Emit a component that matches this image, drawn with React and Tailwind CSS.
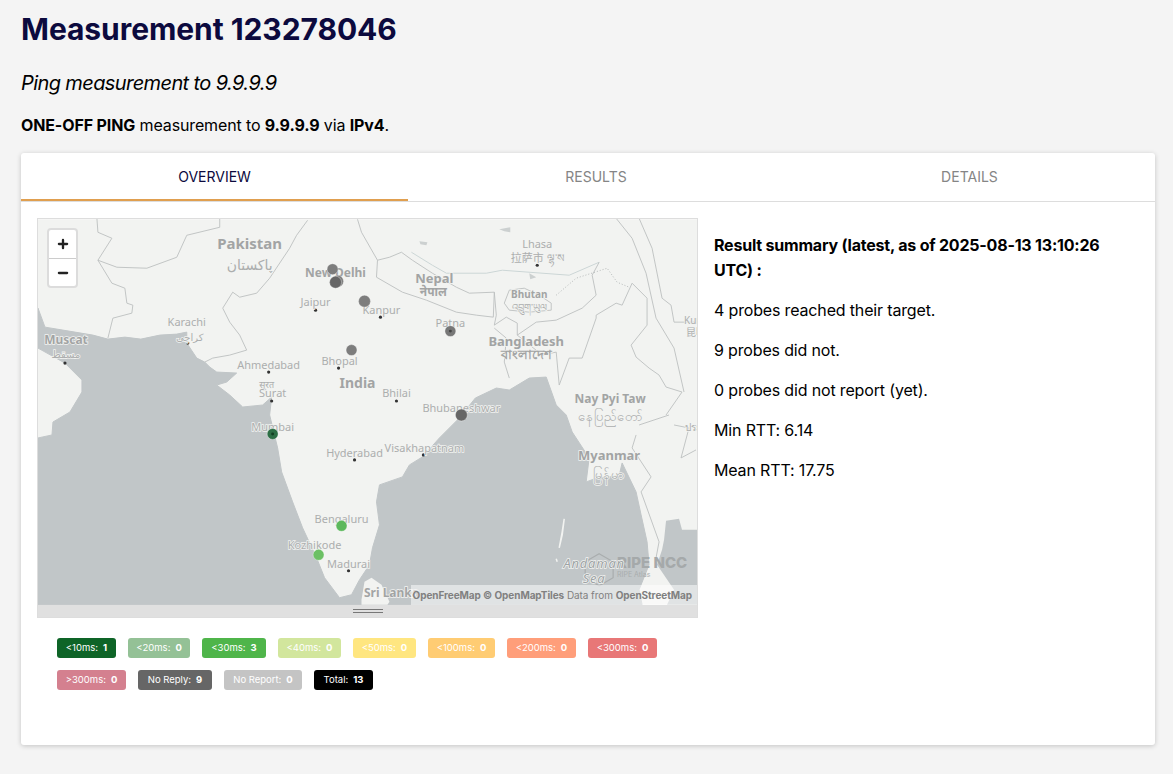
import React from "react";
import { Minus, Plus } from "lucide-react";

const badges = [
  [
    { label: "<10ms:", count: 1, color: "bg-[#0e6427] w-[59px]" },
    { label: "<20ms:", count: 0, color: "bg-[#94c196] w-[62px]" },
    { label: "<30ms:", count: 3, color: "bg-[#4fb54a] w-[64px]" },
    { label: "<40ms:", count: 0, color: "bg-[#d2e69d] w-[63px]" },
    { label: "<50ms:", count: 0, color: "bg-[#ffe680] w-[63px]" },
    { label: "<100ms:", count: 0, color: "bg-[#ffcc73] w-[67px]" },
    { label: "<200ms:", count: 0, color: "bg-[#ff9e7a] w-[69px]" },
    { label: "<300ms:", count: 0, color: "bg-[#e87777] w-[69px]" },
  ],
  [
    { label: ">300ms:", count: 0, color: "bg-[#d4808f] w-[69px]" },
    { label: "No Reply:", count: 9, color: "bg-[#666666] w-[74px]" },
    { label: "No Report:", count: 0, color: "bg-[#c4c4c4] w-[78px]" },
    { label: "Total:", count: 13, color: "bg-black w-[59px]" },
  ],
];

const sea =
  "M38 308 L45 327 L63 330 L93 335 L108 339 L125 337 L141 339 L160 335 L177 334 L187 332 L187 343 L197 358 L205 362 L210 367 L217 372 L237 373 L227 382 L217 385 L230 395 L243 407 L263 405 L272 397 L270 415 L278 448 L282 472 L293 502 L303 528 L317 558 L325 578 L340 598 L352 595 L360 580 L370 565 L373 548 L380 525 L377 502 L380 485 L403 477 L410 465 L423 457 L440 438 L460 418 L476 398 L497 388 L510 390 L530 378 L547 377 L557 405 L567 415 L573 432 L590 458 L587 482 L598 478 L620 476 L623 463 L637 492 L642 515 L648 542 L650 565 L640 590 L643 605 L38 605 L38 438 L52 435 L53 422 L70 412 L82 392 L82 380 L65 363 L38 348 Z";
const eastSea = "M698 530 L683 530 L680 519 L667 521 L665 540 L663 550 L658 565 L675 590 L668 605 L698 605 Z";
const sriLanka = "M362 600 L365 582 L372 578 L382 585 L390 602 L388 605 L362 605 Z";

const borders = [
  "M97 218 L98 232 L112 238 L98 260 L112 283 L125 288 L127 303 L133 305 L132 313 L113 318 L108 338",
  "M220 218 L220 227 L187 235 L177 257 L147 268 L117 267 L98 260",
  "M308 220 L297 235 L290 248 L270 278 L257 293 L240 297 L233 292 L223 308 L230 322 L240 335 L247 350 L230 355 L213 358 L205 362",
  "M358 219 L362 232 L378 260",
  "M378 260 L390 257 L402 252 L413 260 L433 273 L457 287 L470 293 L495 292 L494 317 L477 315 L457 312 L427 300 L403 292 L377 277 Z",
  "M505 303 L510 290 L525 288 L540 295 L552 303 L552 310 L530 312 L510 310 Z",
  "M495 292 L497 315 L495 325 L507 317 L518 323 L518 335 L537 322 L557 320 L583 308 L597 295 L593 275 L600 262",
  "M597 315 L617 303 L623 305 L633 283 L648 298 L648 325 L632 345 L637 357 L650 368 L660 375 L667 387 L683 392 L667 415",
  "M495 328 L507 338 L505 362 L510 378",
  "M518 335 L543 355 L557 352 L560 385 L570 358 L583 358 L597 318 L597 315",
  "M617 218 L633 238 L647 273 L657 318 L675 348 L685 392",
  "M640 218 L653 248 L663 298 L672 305 L675 322 L697 322",
  "M637 435 L633 448 L652 477 L642 492 L660 542 L657 558",
  "M640 425 L670 415",
  "M675 425 L690 428 L682 458 L697 450",
];

const cities = [
  [316, 310], [381, 317], [188, 343], [65, 363], [269, 372], [339, 368], [272, 401], [397, 401],
  [355, 460], [424, 455], [349, 571], [538, 265],
];

const labels = [
  { x: 250, y: 249, text: "Pakistan", size: 15, bold: true },
  { x: 250, y: 270, text: "پاکستان", size: 14 },
  { x: 336, y: 277, text: "New Delhi", size: 12, bold: true },
  { x: 316, y: 306, text: "Jaipur", size: 11 },
  { x: 382, y: 314, text: "Kanpur", size: 11 },
  { x: 451, y: 327, text: "Patna", size: 11 },
  { x: 187, y: 326, text: "Karachi", size: 11 },
  { x: 190, y: 341, text: "کراچی", size: 10 },
  { x: 66, y: 344, text: "Muscat", size: 12, bold: true },
  { x: 66, y: 358, text: "مسقط", size: 10 },
  { x: 269, y: 369, text: "Ahmedabad", size: 11 },
  { x: 340, y: 365, text: "Bhopal", size: 11 },
  { x: 358, y: 388, text: "India", size: 14, bold: true },
  { x: 267, y: 388, text: "सूरत", size: 9 },
  { x: 273, y: 397, text: "Surat", size: 11 },
  { x: 397, y: 397, text: "Bhilai", size: 11 },
  { x: 462, y: 412, text: "Bhubaneshwar", size: 11 },
  { x: 273, y: 431, text: "Mumbai", size: 11 },
  { x: 355, y: 457, text: "Hyderabad", size: 11 },
  { x: 425, y: 452, text: "Visakhapatnam", size: 11 },
  { x: 342, y: 523, text: "Bengaluru", size: 11 },
  { x: 315, y: 549, text: "Kozhikode", size: 11 },
  { x: 349, y: 568, text: "Madurai", size: 11 },
  { x: 392, y: 597, text: "Sri Lanka", size: 12, bold: true },
  { x: 538, y: 248, text: "Lhasa", size: 11 },
  { x: 538, y: 262, text: "拉萨市 ལྷ་ས", size: 11 },
  { x: 435, y: 283, text: "Nepal", size: 13, bold: true },
  { x: 434, y: 296, text: "नेपाल", size: 12, bold: true },
  { x: 530, y: 298, text: "Bhutan", size: 10, bold: true },
  { x: 530, y: 311, text: "འབྲུག་ཡུལ", size: 10 },
  { x: 527, y: 346, text: "Bangladesh", size: 13, bold: true },
  { x: 527, y: 359, text: "বাংলাদেশ", size: 13, bold: true },
  { x: 611, y: 403, text: "Nay Pyi Taw", size: 12, bold: true },
  { x: 611, y: 421, text: "နေပြည်တော်", size: 13 },
  { x: 610, y: 460, text: "Myanmar", size: 13, bold: true },
  { x: 610, y: 479, text: "မြန်မာ", size: 13 },
  { x: 685, y: 324, text: "Kunming", size: 10, anchor: "start" },
  { x: 687, y: 336, text: "昆明市", size: 10, anchor: "start" },
  { x: 686, y: 431, text: "ประเทศไทย", size: 10, anchor: "start" },
];

const probes = [
  { x: 333, y: 269, r: 5.5, fill: "#7d7d7d" },
  { x: 338, y: 281, r: 6, fill: "#7d7d7d" },
  { x: 336, y: 282, r: 6, fill: "#666666" },
  { x: 365, y: 301, r: 6, fill: "#7d7d7d" },
  { x: 352, y: 350, r: 5.5, fill: "#7d7d7d" },
  { x: 451, y: 331, r: 5.5, fill: "#777777" },
  { x: 462, y: 415, r: 6, fill: "#666666" },
  { x: 273, y: 434, r: 5.5, fill: "#2c6e45" },
  { x: 342, y: 526, r: 5.5, fill: "#5cb85c" },
  { x: 319, y: 555, r: 5.5, fill: "#6cc064" },
];

function MapDrawing() {
  return (
    <svg viewBox="38 219 660 386" className="block h-full w-full">
      <rect x="38" y="219" width="660" height="386" fill="#f2f3f1" />
      <path d={sea} fill="#c1c6c8" stroke="#c1c6c8" strokeWidth="1" strokeLinejoin="round" />
      <path d={eastSea} fill="#c1c6c8" />
      <path d={sriLanka} fill="#f2f3f1" />
      <path d="M565 519 L563 532 L560 548 L563 535 Z M557 559 L558 562" stroke="#f2f3f1" strokeWidth="1.5" fill="#f2f3f1" />
      {/* Tibet lakes and the river */}
      <path d="M412 252 L433 265 L447 273 L487 273 L503 270 L570 275 L600 262" fill="none" stroke="#ccd6d6" strokeWidth="1" />
      <path d="M500 229 L511 227 L511 232 L505 231 Z M420 241 L428 242 L427 245 L421 244 Z M453 235 L474 233 M530 273 L537 277 L531 279 Z" fill="#ccd0d0" />
      {borders.map((d, index) => (
        <path key={index} d={d} fill="none" stroke="#bcbfbf" strokeWidth="0.9" strokeLinejoin="round" />
      ))}
      <path d="M557 295 L577 278 L608 268 L618 282 L630 287" fill="none" stroke="#b4b8b8" strokeWidth="1" strokeDasharray="1 2" />
      {cities.map(([x, y]) => (
        <circle key={`${x}-${y}`} cx={x} cy={y} r="1.6" fill="#333333" />
      ))}

      {/* RIPE watermark */}
      <path d="M600 554 L614 562 L614 578 L600 586 L586 578 L586 562 Z" fill="none" stroke="#a9adae" strokeWidth="1.2" />
      <text x="618" y="568" fontSize="15" fontWeight="800" fill="#a5a9aa" className="font-['Inter',sans-serif]">RIPE NCC</text>
      <text x="618" y="577" fontSize="7" fill="#a9adae" className="font-['Inter',sans-serif]">RIPE Atlas</text>

      {labels.map((label) => (
        <text
          key={label.text}
          x={label.x}
          y={label.y}
          textAnchor={label.anchor || "middle"}
          fontSize={label.size}
          fontWeight={label.bold ? 700 : 400}
          fill={label.bold ? "#a2a4a4" : "#acaeae"}
          stroke="#f2f3f1"
          strokeWidth="1.5"
          className="font-['Noto_Sans','DejaVu_Sans','Noto_Sans_CJK_SC',sans-serif] [paint-order:stroke]"
        >
          {label.text}
        </text>
      ))}
      <text x="595" y="568" textAnchor="middle" fontSize="13" fontStyle="italic" letterSpacing="0.8" fill="#9ea3a5" stroke="#f2f3f1" strokeWidth="1.5" className="font-['Noto_Sans',sans-serif] [paint-order:stroke]">Andaman</text>
      <text x="595" y="583" textAnchor="middle" fontSize="13" fontStyle="italic" letterSpacing="0.8" fill="#9ea3a5" stroke="#f2f3f1" strokeWidth="1.5" className="font-['Noto_Sans',sans-serif] [paint-order:stroke]">Sea</text>

      {probes.map((probe) => (
        <circle key={`${probe.x}-${probe.y}`} cx={probe.x} cy={probe.y} r={probe.r} fill={probe.fill} stroke="#ffffff" strokeOpacity="0.6" strokeWidth="0.6" />
      ))}
      <circle cx="451" cy="331" r="1.5" fill="#444444" />
      <circle cx="273" cy="434" r="1.5" fill="#123f22" />
    </svg>
  );
}

function MapPanel() {
  return (
    <div className="flex h-[400px] w-[661px] shrink-0 flex-col border border-[#dddddd]">
      <div className="relative min-h-0 flex-1 overflow-hidden">
        <MapDrawing />
        <div className="absolute left-[9px] top-[9px] flex w-[31px] flex-col overflow-hidden rounded border-2 border-[#dcdcdc] bg-white text-[#222222]">
          <div className="flex h-[29px] items-center justify-center border-b border-[#cccccc]">
            <Plus size={14} strokeWidth={4} />
          </div>
          <div className="flex h-[27px] items-center justify-center">
            <Minus size={14} strokeWidth={4} />
          </div>
        </div>
        <div className="absolute bottom-0 right-0 flex h-[20px] w-[286px] items-center justify-end bg-white/50 pr-[5px] text-[10px] tracking-[-0.007em] text-[#808080]">
          <span className="whitespace-nowrap">
            <b className="font-bold">OpenFreeMap © OpenMapTiles</b> Data from <b className="font-bold">OpenStreetMap</b>
          </span>
        </div>
      </div>
      {/* drag handle */}
      <div className="flex h-[12px] shrink-0 flex-col items-center justify-center gap-[2px] bg-[#e0e0e0]">
        <div className="h-px w-[30px] bg-[#777777]" />
        <div className="h-px w-[30px] bg-[#777777]" />
      </div>
    </div>
  );
}

function Legend() {
  return (
    <div className="mt-[20px] flex flex-col gap-[12px] pl-[20px]">
      {badges.map((row, index) => (
        <div key={index} className="flex gap-[12px]">
          {row.map((badge) => (
            <div
              key={badge.label}
              className={`flex h-[20px] items-center justify-center gap-[5px] whitespace-nowrap rounded-[3px] text-[9.5px] text-white ${badge.color}`}
            >
              <span>{badge.label}</span>
              <span className="font-bold">{badge.count}</span>
            </div>
          ))}
        </div>
      ))}
    </div>
  );
}

export default function App() {
  return (
    <div className="h-[774px] overflow-hidden bg-[#f4f4f4] pl-[21px] pr-[18px] font-['Inter',sans-serif] text-black">
      <h1 className="pt-[10px] text-[30px] font-bold leading-[38px] tracking-[-0.002em] text-[#0c0a3e]">Measurement 123278046</h1>
      <p className="mt-[23px] text-[20px] italic leading-[24px] tracking-[-0.03em]">Ping measurement to 9.9.9.9</p>
      <p className="mt-[18px] text-[16px] leading-[24px] tracking-[-0.008em]">
        <b>ONE-OFF PING</b> measurement to <b>9.9.9.9</b> via <b>IPv4</b>.
      </p>

      <div className="mt-[16px] h-[592px] rounded-[3px] bg-white shadow-[0_1px_5px_rgba(0,0,0,0.2)]">
        <div className="flex h-[49px] border-b border-[#dddddd] text-[14px]">
          <div className="flex flex-auto items-center justify-center border-b-2 border-[#e09f4f] text-[#0c0a3e]">OVERVIEW</div>
          <div className="flex flex-auto items-center justify-center border-b-2 border-transparent text-[#858585]">RESULTS</div>
          <div className="flex flex-auto items-center justify-center border-b-2 border-transparent text-[#858585]">DETAILS</div>
        </div>

        <div className="flex gap-[16px] px-[16px] pt-[16px]">
          <div>
            <MapPanel />
            <Legend />
          </div>
          <div className="flex flex-col gap-[16px] pt-[15px] text-[16px] leading-[24px] tracking-[-0.01em]">
            <p className="-mb-px font-bold leading-[25px] tracking-[-0.013em]">Result summary (latest, as of 2025-08-13 13:10:26 UTC) :</p>
            <p>4 probes reached their target.</p>
            <p>9 probes did not.</p>
            <p>0 probes did not report (yet).</p>
            <p>Min RTT: 6.14</p>
            <p>Mean RTT: 17.75</p>
          </div>
        </div>
      </div>
    </div>
  );
}
